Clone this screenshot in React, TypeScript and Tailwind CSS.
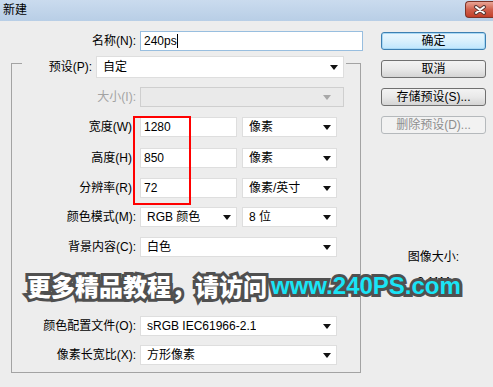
import React from 'react';

const font = "font-['Liberation_Sans','Noto_Sans_CJK_SC',sans-serif]";

function Arrow({ disabled = false }: { disabled?: boolean }) {
  return (
    <svg width="8" height="5" viewBox="0 0 8 5" className="shrink-0">
      <path d="M0 0 L8 0 L4 5 Z" fill={disabled ? '#a8a8a8' : '#111'} />
    </svg>
  );
}

function Select({ text, w, h = 'h-[20px]', disabled = false, arrowPad = 'pr-[5px]' }: { text?: string; w: string; h?: string; disabled?: boolean; arrowPad?: string }) {
  return (
    <div
      className={`${w} ${h} ${arrowPad} flex items-center justify-between pl-[6px] border ${
        disabled ? 'bg-[#eaeaea] border-[#cfcfcf]' : 'bg-white border-[#dedede]'
      }`}
    >
      <span className="truncate">{text}</span>
      <Arrow disabled={disabled} />
    </div>
  );
}

function Field({ text, w }: { text: string; w: string }) {
  return <div className={`${w} h-[20px] flex items-center pl-[3px] bg-white border border-[#dedede]`}>{text}</div>;
}

// labels without a colon end a few px earlier, like the original dialog
function Row({ label, mt, children, muted = false, noColon = false }: { label: string; mt: string; children: React.ReactNode; muted?: boolean; noColon?: boolean }) {
  return (
    <div className={`flex items-center ${mt}`}>
      <div className={`w-[124px] text-right ${noColon ? 'pr-[4px]' : ''} ${muted ? 'text-[#a3a3a3]' : ''}`}>{label}</div>
      <div className="ml-[4px] flex gap-[5px]">{children}</div>
    </div>
  );
}

function Button({ label, focus = false, disabled = false }: { label: string; focus?: boolean; disabled?: boolean }) {
  const look = disabled
    ? 'border-[#b5b9bc] bg-[#f2f2f2] text-[#8e8e8e]'
    : focus
    ? 'border-[#3c7fb1] bg-linear-to-b from-[#eaf6fd] via-[#d9f0fc] to-[#bee6fd] shadow-[inset_0_0_0_1px_#a8d8f4]'
    : 'border-[#707070] bg-linear-to-b from-[#f3f3f3] via-[#e9e9e9] to-[#d4d4d4]';
  return (
    <div className={`h-[18px] w-[105px] rounded-[3px] border flex items-center justify-center leading-none ${look}`}>
      {label}
    </div>
  );
}

export default function App() {
  return (
    <div className={`relative w-[493px] h-[387px] overflow-hidden bg-[#ededed] text-[12px] text-black ${font}`}>
      {/* title bar */}
      <div className="h-[21px] flex items-start justify-between bg-linear-to-b from-[#cadbee] to-[#b8cee6]">
        <span className="ml-[3px] mt-[3px] text-[12px] leading-[14px]">新建</span>
        <div className="mt-[1px] w-[28px] h-[17px] rounded-l-[4px] border border-r-0 border-[#7d3327] bg-linear-to-b from-[#e8a596] via-[#d0604c] to-[#c23e28] flex items-center justify-center">
          <svg width="14" height="10" viewBox="0 0 14 10">
            <path d="M3 2 L11 8 M11 2 L3 8" stroke="#5a3a36" strokeWidth="4" strokeLinecap="round" />
            <path d="M3 2 L11 8 M11 2 L3 8" stroke="#fff" strokeWidth="2" strokeLinecap="round" />
          </svg>
        </div>
      </div>

      <div className="flex pt-[10px]">
        {/* left column */}
        <div className="w-[381px]">
          <div className="flex items-center">
            <div className="w-[136px] text-right">名称(N):</div>
            <div className="ml-[4px] w-[223px] h-[20px] flex items-center pl-[3px] bg-white border border-[#98bedf]">
              240ps<span className="inline-block w-px h-[14px] bg-black" />
            </div>
          </div>

          <div className="relative mt-[12px] ml-[11px] w-[350px] h-[310px] border border-[#a3a3a3]">
            <div className="-mt-[8px] ml-[10px] w-[324px] flex items-center bg-[#ededed]">
              <div className="w-[74px] pr-[4px] text-right">预设(P):</div>
              <Select text="自定" w="w-[248px]" h="h-[22px]" />
            </div>
            <Row label="大小(I):" mt="mt-[9px]" muted>
              <Select w="w-[204px]" disabled arrowPad="pr-[12px]" />
            </Row>
            <Row label="宽度(W)" mt="mt-[10px]" noColon>
              <Field text="1280" w="w-[97px]" />
              <Select text="像素" w="w-[95px]" />
            </Row>
            <Row label="高度(H)" mt="mt-[11px]" noColon>
              <Field text="850" w="w-[97px]" />
              <Select text="像素" w="w-[95px]" />
            </Row>
            <Row label="分辨率(R)" mt="mt-[10px]" noColon>
              <Field text="72" w="w-[97px]" />
              <Select text="像素/英寸" w="w-[95px]" />
            </Row>
            <Row label="颜色模式(M):" mt="mt-[9px]">
              <Select text="RGB 颜色" w="w-[97px]" />
              <Select text="8 位" w="w-[95px]" />
            </Row>
            <Row label="背景内容(C):" mt="mt-[10px]">
              <Select text="白色" w="w-[197px]" />
            </Row>
            <Row label="颜色配置文件(O):" mt="mt-[59px]">
              <Select text="sRGB IEC61966-2.1" w="w-[197px]" />
            </Row>
            <Row label="像素长宽比(X):" mt="mt-[9px]">
              <Select text="方形像素" w="w-[197px]" />
            </Row>

            {/* red highlight annotation */}
            <div className="absolute left-[121px] right-[169px] top-[52px] h-[89px] border-2 border-[#ff0000]" />
          </div>
        </div>

        {/* right column */}
        <div className="w-[105px] pt-[1px]">
          <div className="flex flex-col gap-[10px]">
            <Button label="确定" focus />
            <Button label="取消" />
            <Button label="存储预设(S)..." />
            <Button label="删除预设(D)..." disabled />
          </div>
          <div className="mt-[115px] text-center leading-[16px]">图像大小:</div>
          <div className="mt-[9px] text-center leading-[16px]">3.11M</div>
        </div>
      </div>

      {/* watermark */}
      <div className="absolute left-[27px] top-[268px] flex items-center h-[36px] text-[24px] font-black [-webkit-text-stroke:6px_#505050] [paint-order:stroke_fill]">
        <span className="text-white font-['Noto_Sans_CJK_SC',sans-serif]">更多精品教程，请访问</span>
        <span className="ml-[4px] text-[#19e4f6] font-['Liberation_Sans',sans-serif]">www.240PS.com</span>
      </div>
    </div>
  );
}
